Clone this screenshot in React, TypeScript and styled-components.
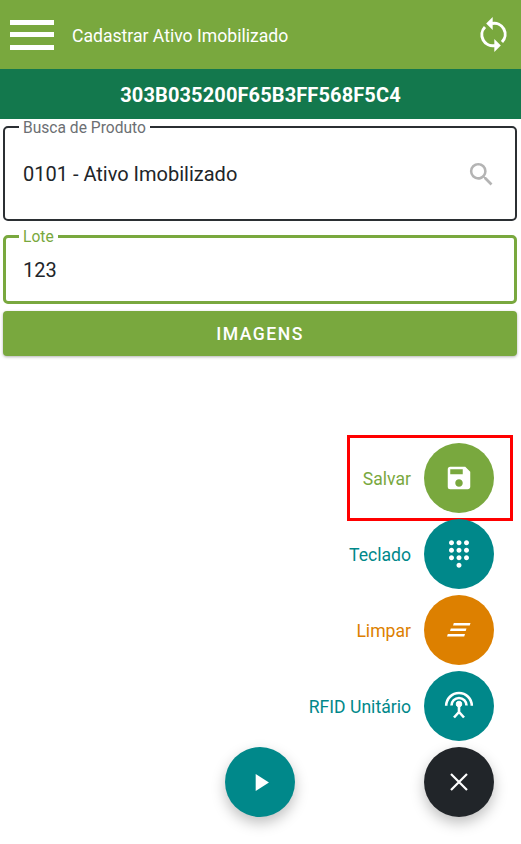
import React, { FunctionComponent, ReactNode } from 'react'
import styled, { createGlobalStyle } from 'styled-components'
import { MdDialpad, MdPlayArrow, MdSave, MdSearch } from 'react-icons/md'

const GREEN = '#79a83e'
const TEAL = '#00888a'
const ORANGE = '#dd8000'
const DARK = '#212529'

type Action = {
  label: string
  color: string
  icon: ReactNode
  highlighted?: boolean
}

const SyncIcon = () => (
  <svg width="32" height="36" viewBox="0 0 32 36" fill="none">
    <path d="M14 6.500A11 11 0 0 1 24 25" stroke="#fff" strokeWidth="3" />
    <path d="M14.700 0v13L8.200 6.500z" fill="#fff" />
    <path d="M17 28.500A11 11 0 0 1 7 10" stroke="#fff" strokeWidth="3" />
    <path d="M16.300 22v13l6.500-6.500z" fill="#fff" />
  </svg>
)

const ClearIcon = () => (
  <svg width="24" height="14" viewBox="0 0 24 14" fill="#fff">
    <path d="M6.800 0H23.500l-.8 2.500H6z" />
    <path d="M3.800 5.500H19.500l-.8 2.500H3z" />
    <path d="M.8 11H18l-.8 2.500H0z" />
  </svg>
)

const RfidIcon = () => (
  <svg width="30" height="32" viewBox="0 0 30 32" fill="none" stroke="#fff" strokeWidth="2.600">
    <path d="M2.200 15.800a12.800 12.800 0 0 1 25.600 0" />
    <path d="M7.500 15.500a7.500 7.500 0 0 1 15 0" />
    <circle cx="15" cy="14" r="2.800" fill="#fff" strokeWidth="1" />
    <path d="M15 16v6M15 22l-5 5.500M15 22l5 5.500" />
  </svg>
)

const CloseIcon = () => (
  <svg width="18" height="18" viewBox="0 0 18 18" fill="none" stroke="#fff" strokeWidth="2.200">
    <path d="M1 1l16 16M17 1L1 17" />
  </svg>
)

const actions: Action[] = [
  { label: 'Salvar', color: GREEN, icon: <MdSave size={30} />, highlighted: true },
  { label: 'Teclado', color: TEAL, icon: <MdDialpad size={30} /> },
  { label: 'Limpar', color: ORANGE, icon: <ClearIcon /> },
  { label: 'RFID Unitário', color: TEAL, icon: <RfidIcon /> },
]

const App: FunctionComponent = () => (
  <Screen>
    <GlobalStyle />
    <Header>
      <Menu aria-label="Menu">
        <MenuBar />
        <MenuBar />
        <MenuBar />
      </Menu>
      <Title>Cadastrar Ativo Imobilizado</Title>
      <SyncButton aria-label="Sincronizar">
        <SyncIcon />
      </SyncButton>
    </Header>
    <TagBar>303B035200F65B3FF568F5C4</TagBar>
    <Form>
      <SearchField>
        <FieldLabel>Busca de Produto</FieldLabel>
        <FieldRow $height={78}>
          <FieldValue>0101 - Ativo Imobilizado</FieldValue>
          <SearchGlyph>
            <MdSearch size={31} />
          </SearchGlyph>
        </FieldRow>
      </SearchField>
      <LotField>
        <LotLabel>Lote</LotLabel>
        <FieldRow $height={52}>
          <FieldValue>123</FieldValue>
        </FieldRow>
      </LotField>
      <ImagesButton>IMAGENS</ImagesButton>
    </Form>
    <PlayFab aria-label="Iniciar">
      <MdPlayArrow size={29} />
    </PlayFab>
    <FabMenu>
      {actions.map((action) => (
        <FabRow key={action.label} $highlighted={action.highlighted}>
          <FabLabel $color={action.color}>{action.label}</FabLabel>
          <Fab $color={action.color}>{action.icon}</Fab>
        </FabRow>
      ))}
      <FabRow>
        <Fab $color={DARK} $raised aria-label="Fechar">
          <CloseIcon />
        </Fab>
      </FabRow>
    </FabMenu>
  </Screen>
)

export default App

const GlobalStyle = createGlobalStyle`
  html, body {
    margin: 0;
    padding: 0;
    background: #fff;
  }

  * {
    box-sizing: border-box;
  }

  button {
    border: 0;
    padding: 0;
    background: none;
    color: inherit;
    font: inherit;
  }
`

const Screen = styled.div`
  position: relative;
  width: 521px;
  height: 844px;
  overflow: hidden;
  font-family: Roboto, 'Liberation Sans', sans-serif;
  color: #212529;
`

const Header = styled.header`
  display: flex;
  align-items: center;
  height: 69px;
  padding: 0 11px 0 10px;
  background: ${GREEN};
  color: #fff;
`

const Menu = styled.button`
  display: flex;
  flex-direction: column;
  gap: 7.500px;
  width: 44px;
  margin-right: 18px;
`

const MenuBar = styled.span`
  display: block;
  height: 5px;
  background: #fff;
`

const Title = styled.h1`
  flex: 1;
  margin: 0;
  padding-top: 2px;
  font-size: 17.600px;
  font-weight: 400;
`

const SyncButton = styled.button`
  display: flex;
  width: 32px;
  height: 36px;
`

const TagBar = styled.div`
  display: flex;
  align-items: center;
  justify-content: center;
  height: 50px;
  padding-top: 2px;
  background: #13784d;
  color: #fff;
  font-size: 20px;
  font-weight: 700;
  letter-spacing: 0.12px;
`

const Form = styled.main`
  display: flex;
  flex-direction: column;
  padding: 0 4px 0 3px;
`

const SearchField = styled.fieldset`
  margin: 0;
  padding: 0 18px 6px 18px;
  border: 2px solid #2b2f33;
  border-radius: 5px;
`

const FieldRow = styled.div<{ $height: number }>`
  display: flex;
  align-items: center;
  justify-content: space-between;
  height: ${({ $height }) => $height}px;
`

const FieldLabel = styled.legend`
  margin-left: -4px;
  padding: 2px 4px 0;
  color: #6c6f73;
  font-size: 15.600px;
  line-height: 14px;
`

const LotLabel = styled(FieldLabel)`
  color: ${GREEN};
`

const FieldValue = styled.span`
  font-size: 20px;
  line-height: 24px;
`

const SearchGlyph = styled.span`
  display: flex;
  color: #b4b4b4;
`

const LotField = styled.fieldset`
  margin: 7px 0 0;
  padding: 0 17px 5px 17px;
  border: 3px solid ${GREEN};
  border-radius: 5px;
`

const ImagesButton = styled.button`
  height: 45px;
  margin-top: 7px;
  padding-top: 1px;
  border-radius: 4px;
  background: ${GREEN};
  box-shadow: 0 1px 3px rgba(0, 0, 0, 0.3);
  color: #fff;
  font-size: 17.600px;
  font-weight: 500;
  letter-spacing: 1.500px;
`

const FabMenu = styled.div`
  position: absolute;
  right: 27px;
  bottom: 27px;
  display: flex;
  flex-direction: column;
  align-items: flex-end;
  gap: 6px;
`

const FabRow = styled.div<{ $highlighted?: boolean }>`
  position: relative;
  display: flex;
  align-items: center;
  gap: 13px;

  ${({ $highlighted }) =>
    $highlighted &&
    `
    &::after {
      content: '';
      position: absolute;
      top: -8px;
      right: -19px;
      bottom: -8px;
      left: -16px;
      border: 3px solid #f00;
      pointer-events: none;
    }
  `}
`

const FabLabel = styled.span<{ $color: string }>`
  padding-top: 2px;
  color: ${({ $color }) => $color};
  font-size: 17.600px;
`

const Fab = styled.button<{ $color: string; $raised?: boolean }>`
  display: flex;
  align-items: center;
  justify-content: center;
  width: 70px;
  height: 70px;
  border-radius: 50%;
  background: ${({ $color }) => $color};
  box-shadow: ${({ $raised }) => ($raised ? '0 6px 14px rgba(0, 0, 0, 0.25)' : 'none')};
  color: #fff;
`

const PlayFab = styled(Fab).attrs({ $color: TEAL, $raised: true })`
  position: absolute;
  left: 225px;
  bottom: 27px;
`
